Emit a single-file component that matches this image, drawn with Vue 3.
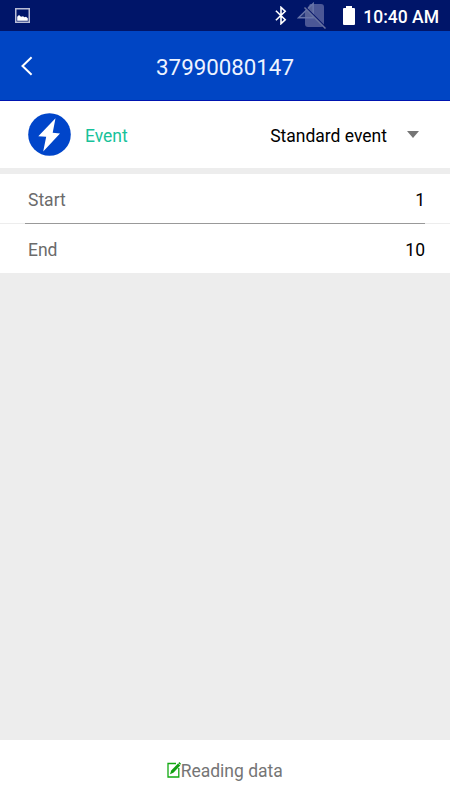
<script setup>
const title = '37990080147'
const rows = [
  { label: 'Start', value: '1' },
  { label: 'End', value: '10' }
]
</script>

<template>
  <div class="screen">
    <div class="status">
      <svg class="pic" width="15" height="15" viewBox="0 0 15 15">
        <rect x=".75" y=".75" width="13.5" height="13.5" fill="none" stroke="#b9bdd6" stroke-width="1.5" />
        <path d="M2.2 12.8V8.8L4 6.9L6 8.7L8 8.3L9.5 9.3L11 8.7L12.8 10.3V12.8Z" fill="#fff" />
      </svg>
      <div class="tray">
        <svg class="bt" width="12" height="19" viewBox="0 0 12 19">
          <path d="M.9 4.8L10.2 13.8L6 17.7V1.3L10.2 5.2L.9 14.2" fill="none" stroke="#fff" stroke-width="1.6" />
        </svg>
        <svg class="sim" width="30" height="27" viewBox="0 0 30 27">
          <path d="M13 2H24Q27 2 27 5V22Q27 25 24 25H11Q8 25 8 22V10Z" fill="#4b5796" />
          <path d="M1.5 15.8L16.2 1.5V15.8Z" fill="#78809f" fill-opacity=".28" stroke="#6875a9" stroke-width="1.4" />
          <path d="M9 5.5L29.5 26" stroke="#07156a" stroke-width="1.2" />
          <path d="M7.5 5.5L28.5 26.5" stroke="#66729f" stroke-width="1.5" />
        </svg>
        <svg class="bat" width="12" height="19" viewBox="0 0 12 19">
          <path d="M3 0H9V2H11Q12 2 12 3V18Q12 19 11 19H1Q0 19 0 18V3Q0 2 1 2H3Z" fill="#fff" />
        </svg>
        <span class="clock">10:40 AM</span>
      </div>
    </div>
    <header class="bar">
      <svg class="back" width="14" height="22" viewBox="0 0 14 22">
        <path d="M11.6 2.3L2.5 11L11.6 19.7" fill="none" stroke="#fff" stroke-width="2" />
      </svg>
      <h1>{{ title }}</h1>
    </header>
    <section class="event">
      <svg class="bolt" width="43" height="43" viewBox="0 0 43 43">
        <circle cx="21.5" cy="21.5" r="21.3" fill="#0045ca" />
        <path d="M27.5 5.2L10.3 23.2L18.2 23.8L15.2 38.5L32 20.4L24.7 19.8Z" fill="#fff" />
      </svg>
      <span class="name">Event</span>
      <span class="choice">Standard event</span>
      <svg class="arrow" width="12" height="7" viewBox="0 0 12 7"><path d="M0 0H12L6 7Z" fill="#757575" /></svg>
    </section>
    <section class="range">
      <div v-for="row in rows" :key="row.label" class="row">
        <span>{{ row.label }}</span><span class="value">{{ row.value }}</span>
      </div>
    </section>
    <footer class="foot">
      <svg class="edit" width="14" height="16" viewBox="0 0 14 16">
        <path d="M9 1.5H1V15H11.8V6" fill="none" stroke="#12aa12" stroke-width="1.3" />
        <path d="M3 12.2L4.2 8.6L11 1.6L13.3 3.5L6.4 10.8Z" fill="#12a012" />
        <path d="M11.3 1.2L12.4 0L14 1.8L13.3 2.8Z" fill="#12a012" />
      </svg>
      <span>Reading data</span>
    </footer>
  </div>
</template>

<style>
body { margin: 0; }
</style>
<style scoped>
.screen { width: 450px; height: 800px; display: flex; flex-direction: column; background: #ededed; font-family: Roboto, sans-serif; font-size: 17.5px; overflow: hidden; }
.status { height: 31px; flex: none; box-sizing: border-box; background: #001569; display: flex; justify-content: space-between; padding: 0 11px 0 15px; }
.pic { margin-top: 8px; }
.tray { display: flex; align-items: flex-start; color: #fff; }
.bt { margin: 6px 10px 0 0; }
.sim { margin: 2px 16px 0 0; }
.bat { margin: 6px 8px 0 0; }
.clock { font-size: 17.5px; font-weight: 500; line-height: 34px; white-space: nowrap; }
.bar { height: 70px; flex: none; box-sizing: border-box; background: #0045c4; border-bottom: 1px solid #0015b0; display: flex; align-items: center; padding: 0 20px; color: #fff; }
.back { flex: none; }
h1 { flex: 1; margin: 3px 14px 0 0; font-size: 22.3px; font-weight: 400; text-align: center; color: #edf3ff; }
.event { height: 67px; flex: none; display: flex; align-items: center; background: #fff; padding: 0 31px 0 28px; margin-bottom: 6px; }
.name { color: #17c29a; margin: 3px 0 0 14px; }
.choice { color: #000; margin: 3px 20px 0 auto; }
.range { background: #fff; height: 99px; flex: none; }
.row { height: 49px; box-sizing: border-box; display: flex; align-items: center; justify-content: space-between; padding: 3px 25px 0 28px; color: #6b6b6b; }
.row + .row { height: 50px; background: linear-gradient(to right, #ededed 25px, #999 25px, #999 425px, #ededed 425px) top / 100% 1px no-repeat; }
.value { color: #000; }
.foot { height: 60px; flex: none; box-sizing: border-box; margin-top: auto; background: #fff; color: #757575; display: flex; align-items: center; justify-content: center; padding: 2px 0 0; }
.edit { margin: 0 -.5px 2px 0; }
</style>
